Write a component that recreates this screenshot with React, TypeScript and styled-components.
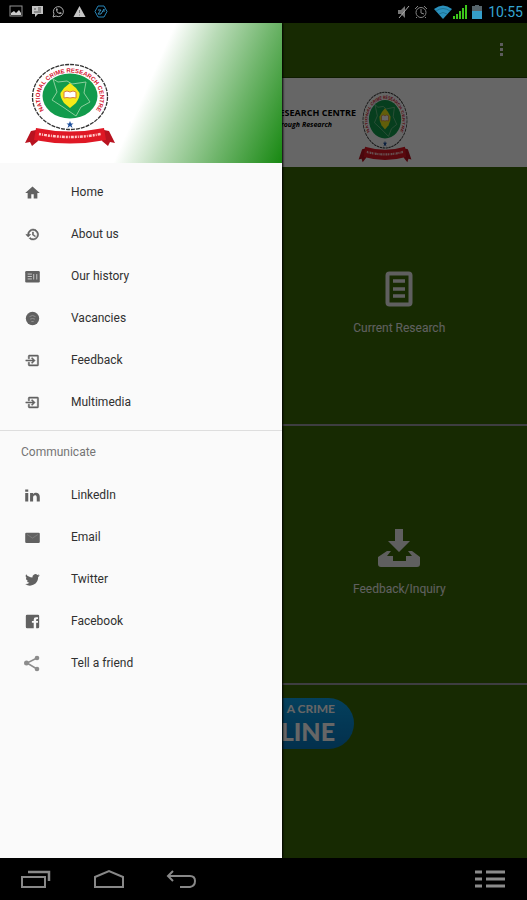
import React from "react";
import styled, { createGlobalStyle } from "styled-components";

const GlobalStyle = createGlobalStyle`
  * { box-sizing: border-box; }
  body { margin: 0; background: #000; font-family: Roboto, "Liberation Sans", sans-serif; }
  button { font: inherit; color: inherit; background: none; border: 0; padding: 0; cursor: pointer; }
  svg { display: block; }
`;

const Device = styled.div`
  display: flex;
  flex-direction: column;
  min-height: 100vh;
  background: #000;
`;

const StatusBar = styled.header`
  display: flex;
  align-items: center;
  justify-content: space-between;
  height: 23px;
  padding: 0 4px 0 9px;
`;

const StatusGroup = styled.div<{ $gap: number }>`
  display: flex;
  align-items: center;
  gap: ${(p) => p.$gap}px;
`;

const Clock = styled.time`
  color: #35a5d2;
  font-size: 14px;
  line-height: 22px;
  padding-left: 1px;
`;

const Stage = styled.div`
  position: relative;
  display: flex;
  flex: 1;
  overflow: hidden;
`;

const Page = styled.main`
  display: flex;
  flex-direction: column;
  flex: 1;
  background: #3b6a05;
  color: #fff;
`;

const TitleBar = styled.div`
  display: flex;
  align-items: center;
  justify-content: flex-end;
  height: 55px;
  padding-right: 23px;
  border-bottom: 1px solid #254800;
`;

const Banner = styled.div`
  display: flex;
  align-items: center;
  gap: 2px;
  height: 89px;
  padding: 8px 115px 0 0;
  justify-content: flex-end;
  background: #fff;
  color: #000;
`;

const BannerText = styled.div`
  display: flex;
  flex-direction: column;
  width: 90px;
  padding-bottom: 16px;
  align-items: flex-end;
  white-space: nowrap;
`;

const BannerTitle = styled.strong`
  font: 700 9px/12px "Open Sans", sans-serif;
`;

const BannerMotto = styled.em`
  font: italic 700 7px/12px "Open Sans", sans-serif;
  padding-right: 24px;
`;

const TileGrid = styled.div`
  display: grid;
  grid-template-columns: 1fr 1fr;
  column-gap: 16px;
`;

const Tile = styled.button`
  grid-column: 2;
  display: flex;
  flex-direction: column;
  align-items: center;
  justify-content: center;
  gap: 13px;
  height: 259px;
  padding-top: 16px;
  border-bottom: 2px solid #9c9ca4;
  font-size: 12px;
  line-height: 16px;
  color: #f0f0f0;
`;

const HotlineRow = styled.div`
  display: flex;
  justify-content: flex-end;
  padding: 13px 173px 0 0;
`;

const Hotline = styled.button`
  display: flex;
  flex-direction: column;
  align-items: flex-end;
  justify-content: center;
  width: 120px;
  height: 51px;
  padding-right: 19px;
  border-radius: 26px;
  background: linear-gradient(#0aa0e8, #0878c0);
  color: #fff;
  white-space: nowrap;
`;

const HotlineSmall = styled.span`
  font: 700 12px/15px Lato, sans-serif;
`;

const HotlineLarge = styled.span`
  font: 900 25px/31px Lato, sans-serif;
`;

const Scrim = styled.div`
  position: absolute;
  inset: 0;
  background: rgba(0, 0, 0, 0.6);
`;

const Drawer = styled.aside`
  position: absolute;
  inset: 0 auto 0 0;
  width: 282px;
  background: #fafafa;
  box-shadow: 1px 0 2px #000;
`;

const DrawerHeader = styled.div`
  display: flex;
  align-items: center;
  height: 140px;
  padding: 24px 0 0 24px;
  background: linear-gradient(114deg, #fff 0%, #fff 51%, #b9dbb7 64%, #6fb56b 80%, #178811 100%);
`;

const Menu = styled.nav<{ $divided?: boolean }>`
  display: flex;
  flex-direction: column;
  padding: ${(p) => (p.$divided ? "11px 0 0" : "8px 0 7px")};
  border-top: ${(p) => (p.$divided ? "1px solid #dedede" : "0")};
`;

const MenuTitle = styled.h2`
  margin: 0 0 11px;
  padding-left: 21px;
  font-size: 12px;
  font-weight: 400;
  line-height: 21px;
  color: #757575;
`;

const MenuItem = styled.a`
  display: grid;
  grid-template-columns: 17px 1fr;
  column-gap: 30px;
  align-items: center;
  height: 42px;
  padding-left: 24px;
  color: #303030;
  font-size: 12px;
  text-decoration: none;
`;

const NavBar = styled.footer`
  display: flex;
  align-items: center;
  justify-content: space-between;
  height: 42px;
  padding: 0 21px 0 20px;
`;

const NavGroup = styled.div`
  display: flex;
  gap: 41px;
`;

function Emblem({ width, height, id }: { width: number; height: number; id: string }) {
  return (
    <svg width={width} height={height} viewBox="0 0 92 84" preserveAspectRatio="none" role="img" aria-label="National Crime Research Centre">
      <defs>
        <path id={id} d="M20 47 A30 25 0 1 1 72 47" />
      </defs>
      <ellipse cx="46" cy="34" rx="37.5" ry="32.5" fill="#fff" stroke="#333" strokeWidth="1.3" strokeDasharray="4 1" />
      <ellipse cx="46" cy="33" rx="27.5" ry="22.5" fill="#129b4c" />
      <text fill="#d3142c" fontSize="6" fontWeight="700" fontFamily="Liberation Sans, sans-serif">
        <textPath href={`#${id}`} startOffset="50%" textAnchor="middle">NATIONAL CRIME RESEARCH CENTRE</textPath>
      </text>
      <path d="M29 16 L34 19 L43 18 L48 21 L62 19 L60 30 L66 39 L57 44 L52 53 L39 44 L28 37 L33 29 Z" fill="none" stroke="#8bce9c" strokeWidth="1" />
      <path d="M46 20 Q52 24 55.500 30 Q56 34 52 40 L46 45 L40 40 Q36 34 36.500 30 Q40 24 46 20Z" fill="#f6ea19" />
      <path d="M40 29 Q43 27 46 29 Q49 27 52 29 V35 Q49 34 46 35 Q43 34 40 35Z" fill="#fff" stroke="#d9803c" strokeWidth="1" />
      <path d="M46 58 l1 2.500 h2.500 l-2 1.500 1 3 -2.500-2 -2.500 2 1-3 -2-1.500 H45Z" fill="#1c4e9c" />
      <path d="M12 67 L7 68 L1 80 L6 79 L8 83 L14 78 Z M80 67 L85 68 L91 80 L86 79 L84 83 L78 78Z" fill="#b81320" />
      <path d="M12 65 Q46 72 80 65 L82 77 Q46 84 10 77Z" fill="#df1825" />
      <path d="M15 71 Q46 77 77 71" fill="none" stroke="#ffc9c9" strokeWidth="2.500" strokeDasharray="2 1 1 1 3 1" />
    </svg>
  );
}

const icons: Record<string, React.ReactNode> = {
  home: <path d="M10 22v-7h4v7h6v-9h4L12 2 0 13h4v9z" />,
  history: <path d="M13 3a9 9 0 0 0-9 9H1l4 4 4-4H6a7 7 0 1 1 2 5l-1.400 1.400A9 9 0 1 0 13 3zm-1 5v5l4.300 2.500.7-1.200-3.500-2.100V8z" stroke="#616161" />,
  news: (
    <>
      <rect x="0" y="3" width="24" height="19" rx="2" />
      <path d="M4 8h7M4 12h7M4 16h7M14 8v9M19 8v9" stroke="#c8c8c8" strokeWidth="1.600" />
    </>
  ),
  vacancies: (
    <>
      <circle cx="12" cy="12" r="11" />
      <path d="M7 9q5-4 10 0M8 13q4-2 8 0M10 17h4" stroke="#929292" strokeWidth="1.500" fill="none" />
    </>
  ),
  enter: <path d="M10 15.600 11.400 17l5-5-5-5L10 8.400 12.600 11H1v2h11.600zM20 3H7a2 2 0 0 0-2 2v4h2V5h13v14H7v-4H5v4a2 2 0 0 0 2 2h13a2 2 0 0 0 2-2V5a2 2 0 0 0-2-2z" stroke="#616161" strokeWidth=".8" />,
  linkedin: <path d="M0 8h5v14H0zM0 2h5v4H0zM8 8h5v2c3-4 11-3 11 4v8h-5v-7c0-5-6-4-6 0v7H8z" />,
  email: (
    <>
      <rect x="0" y="4" width="24" height="17" rx="2" />
      <path d="m3 7 9 6 9-6" stroke="#8b8b8b" fill="none" />
    </>
  ),
  twitter: <path d="M24 5.100a9 9 0 0 1-3 .7 4.500 4.500 0 0 0 2-2.500 9 9 0 0 1-2.900 1.100A5 5 0 0 0 11.800 8.500 12.800 12.800 0 0 1 1.500 3.300a5 5 0 0 0 1.600 6.500 4.500 4.500 0 0 1-2-.6 4.500 4.500 0 0 0 3.600 4.800 4.500 4.500 0 0 1-2 .1 4.500 4.500 0 0 0 4.200 3.100A9 9 0 0 1 0 19.500 13.500 13.500 0 0 0 21.300 8 9 9 0 0 0 24 5.100z" />,
  facebook: <path d="M3 1h18a2 2 0 0 1 2 2v18a2 2 0 0 1-2 2h-3v-9h3v-3h-3V9q0-1 2-1h1V5h-3q-4 0-4 4v2h-3v3h3v9H3a2 2 0 0 1-2-2V3a2 2 0 0 1 2-2z" />,
};

function MenuIcon({ name }: { name: string }) {
  if (name === "share") {
    return (
      <svg width="17" height="17" viewBox="0 0 17 17" fill="#8c8c8c" aria-hidden="true">
        <path d="M13 3 3 8l10 6" fill="none" stroke="#8c8c8c" strokeWidth="1.500" />
        <circle cx="13" cy="3" r="2.300" /><circle cx="2.500" cy="8" r="2.500" /><circle cx="13" cy="14" r="2.300" />
      </svg>
    );
  }
  return (
    <svg width="17" height="15" viewBox="-2 0 28 24" fill="#616161" aria-hidden="true">
      {icons[name]}
    </svg>
  );
}

const mainItems = [
  ["home", "Home"],
  ["history", "About us"],
  ["news", "Our history"],
  ["vacancies", "Vacancies"],
  ["enter", "Feedback"],
  ["enter", "Multimedia"],
];

const contactItems = [
  ["linkedin", "LinkedIn"],
  ["email", "Email"],
  ["twitter", "Twitter"],
  ["facebook", "Facebook"],
  ["share", "Tell a friend"],
];

function MenuItems({ items }: { items: string[][] }) {
  return (
    <>
      {items.map(([icon, label]) => (
        <MenuItem key={label} href="#">
          <MenuIcon name={icon} />
          <span>{label}</span>
        </MenuItem>
      ))}
    </>
  );
}

function Notifications() {
  return (
    <StatusGroup $gap={8} aria-hidden="true">
      <svg width="14" height="13" viewBox="0 0 14 13"><rect x="1" y="1" width="12" height="10" fill="none" stroke="#929292" /><path d="M2 10V8l3-2 2 2 3-3 2 3v2z" fill="#ccc" /></svg>
      <svg width="13" height="13" viewBox="0 0 13 13"><path d="M1 1h11v8H7l-3 3V9H1z" fill="#c2c2c2" /><path d="M3 4h2M7 3h3M7 5h3M3 7h7" stroke="#555" /></svg>
      <svg width="13" height="13" viewBox="0 0 13 13" fill="none"><path d="m1 12 1-3a5 5 0 1 1 2 2z" stroke="#aaa" /><path d="M4 4c0 3 2 5 5 5l1-1-2-1-1 1-2-2 1-1-1-2z" fill="#aaa" /></svg>
      <svg width="13" height="13" viewBox="0 0 13 13"><path d="m6.500 1 6 11H.5z" fill="#c6c6c6" /><path d="M6.500 5v3M6.500 9.500v1" stroke="#777" /></svg>
      <svg width="14" height="13" viewBox="0 0 14 13" fill="none" stroke="#2685b8"><path d="M4 1h6l3 5.500-3 5.500H4L1 6.500z" /><path d="M4 5h3L4 9h3l3-5v3" stroke="#368fbd" /></svg>
    </StatusGroup>
  );
}

function SystemState() {
  return (
    <StatusGroup $gap={1}>
      <svg width="13" height="14" viewBox="0 0 13 14" aria-hidden="true"><path d="M1 5h3l4-4v12L4 9H1z" fill="#777" /><path d="m12 1-10 12" stroke="#aaa" /></svg>
      <svg width="22" height="14" viewBox="2 0 22 14" fill="none" stroke="#858585" aria-hidden="true"><circle cx="12" cy="7.500" r="5" /><path d="M12 4v4l3 1M6 4l3-3M15 1l3 3M8 12l-1 1M16 12l1 1" /></svg>
      <svg width="18" height="14" viewBox="0 0 18 14" fill="#2b91bd" aria-hidden="true"><path d="M0 4Q9-3 18 4L9 14z" /><path d="M2 6Q9 1 16 6M5 9q4-3 8 0" fill="none" stroke="#176583" strokeWidth=".7" /></svg>
      <svg width="14" height="14" viewBox="0 0 14 14" fill="#3dc51b" aria-hidden="true"><path d="M0 14v-3h2v3zM3 14V9h2v5zM6 14V6h2v8zM9 14V3h2v11zM12 14V0h2v14z" /></svg>
      <svg width="18" height="14" viewBox="-2 0 18 14" aria-hidden="true"><path d="M5 0h4v1h3v13H2V1h3z" fill="#56646b" /><path d="M2 6h10v8H2z" fill="#359ec9" /></svg>
      <Clock>10:55</Clock>
    </StatusGroup>
  );
}

export default function App() {
  return (
    <>
      <GlobalStyle />
      <Device>
        <StatusBar>
          <Notifications />
          <SystemState />
        </StatusBar>
        <Stage>
          <Page>
            <TitleBar>
              <button aria-label="More options">
                <svg width="5" height="16" viewBox="0 0 5 16" fill="#e6e6e6"><path d="M1 1h3v3H1zM1 6h3v3H1zM1 11h3v3H1z" /></svg>
              </button>
            </TitleBar>
            <Banner>
              <BannerText>
                <BannerTitle>RESEARCH CENTRE</BannerTitle>
                <BannerMotto>through Research</BannerMotto>
              </BannerText>
              <Emblem width={54} height={72} id="banner-arc" />
            </Banner>
            <TileGrid>
              <Tile>
                <svg width="28" height="36" viewBox="0 0 28 36" fill="none" stroke="#eee" aria-hidden="true"><rect x="2.500" y="2.500" width="23" height="31" rx="2" strokeWidth="4" /><path d="M8 10h12M8 18h12M8 25h12" strokeWidth="3.500" /></svg>
                Current Research
              </Tile>
              <Tile>
                <svg width="44" height="39" viewBox="0 0 44 39" fill="#eee" aria-hidden="true"><path d="M18 0h8v12h7L22 23 11 12h7z" /><path d="M10 22h4l-4 5h6v5h13v-5h6l-4-5h4l8 6v7q0 3-3 3H4q-3 0-3-3v-7z" /></svg>
                Feedback/Inquiry
              </Tile>
            </TileGrid>
            <HotlineRow>
              <Hotline>
                <HotlineSmall>A CRIME</HotlineSmall>
                <HotlineLarge>LINE</HotlineLarge>
              </Hotline>
            </HotlineRow>
          </Page>
          <Scrim />
          <Drawer>
            <DrawerHeader>
              <Emblem width={92} height={84} id="drawer-arc" />
            </DrawerHeader>
            <Menu aria-label="Main">
              <MenuItems items={mainItems} />
            </Menu>
            <Menu $divided aria-label="Communicate">
              <MenuTitle>Communicate</MenuTitle>
              <MenuItems items={contactItems} />
            </Menu>
          </Drawer>
        </Stage>
        <NavBar>
          <NavGroup>
            <button aria-label="Recent apps">
              <svg width="32" height="20" viewBox="0 0 32 20" fill="none" stroke="#888" strokeWidth="2"><rect x="2" y="8" width="23" height="10" /><path d="M8 3h21v9" strokeWidth="2.500" /></svg>
            </button>
            <button aria-label="Home">
              <svg width="32" height="20" viewBox="0 0 32 20" fill="none" stroke="#888" strokeWidth="2"><path d="M2 8 16 2l14 6v10H2z" /></svg>
            </button>
            <button aria-label="Back">
              <svg width="32" height="20" viewBox="0 0 32 20" fill="none" stroke="#888" strokeWidth="2"><path d="m7 2-5 5 5 5M2 7h22q5 0 5 5t-5 6H14" /></svg>
            </button>
          </NavGroup>
          <button aria-label="Menu">
            <svg width="32" height="20" viewBox="0 0 32 20" stroke="#8b8b8b" strokeWidth="3"><path d="M1 3h7M12 3h19M1 10h7M12 10h19M1 17h7M12 17h19" /></svg>
          </button>
        </NavBar>
      </Device>
    </>
  );
}
